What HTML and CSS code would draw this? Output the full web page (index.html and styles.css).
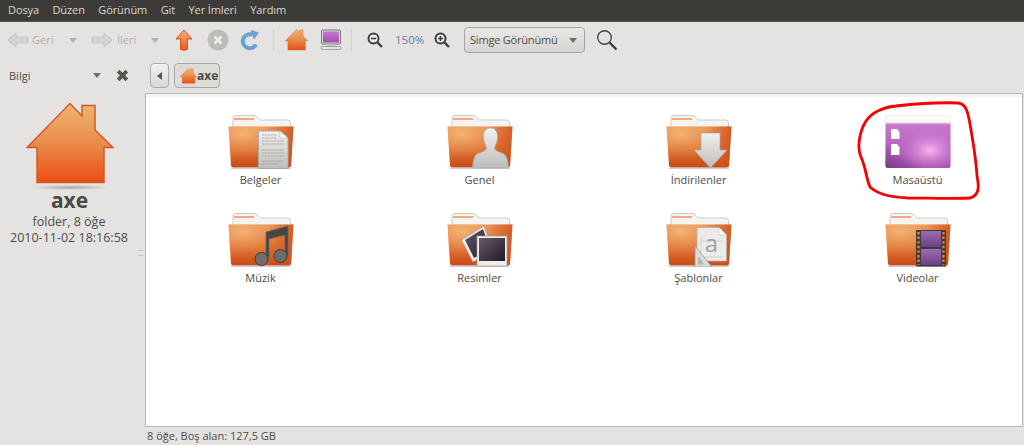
FILE: index.html
```html
<!DOCTYPE html>
<html lang="tr">
<head>
<meta charset="utf-8">
<title>axe - Dosya Yöneticisi</title>
<link rel="stylesheet" href="styles.css">
</head>
<body>
<svg class="defs" width="0" height="0" aria-hidden="true">
  <defs>
    <linearGradient id="fb" x1="0" y1="0" x2="0" y2="1"><stop offset="0" stop-color="#e9975a"/><stop offset=".55" stop-color="#de7434"/><stop offset="1" stop-color="#c94a16"/></linearGradient>
    <radialGradient id="fh" cx=".22" cy=".18" r=".6"><stop offset="0" stop-color="#f6c080" stop-opacity=".75"/><stop offset="1" stop-color="#f0a060" stop-opacity="0"/></radialGradient>
    <linearGradient id="fr" x1="0" y1="0" x2="1" y2="0"><stop offset=".6" stop-color="#d2521c" stop-opacity="0"/><stop offset="1" stop-color="#cf4f18" stop-opacity=".8"/></linearGradient>
    <linearGradient id="hg" x1="0" y1="0" x2="0" y2="1"><stop offset="0" stop-color="#efb574"/><stop offset=".5" stop-color="#e98c4a"/><stop offset="1" stop-color="#e94e13"/></linearGradient>
    <linearGradient id="gg" x1="0" y1="0" x2="0" y2="1"><stop offset="0" stop-color="#f1f1ef"/><stop offset="1" stop-color="#bdbcb9"/></linearGradient>
    <linearGradient id="ph" x1="0" y1="0" x2="1" y2="1"><stop offset="0" stop-color="#6a5a72"/><stop offset="1" stop-color="#1e1a20"/></linearGradient>
    <linearGradient id="ua" x1="0" y1="0" x2="0" y2="1"><stop offset="0" stop-color="#f5b070"/><stop offset="1" stop-color="#e8591c"/></linearGradient>
    <linearGradient id="pg" x1="0" y1="0" x2="0" y2="1"><stop offset="0" stop-color="#c979d0"/><stop offset="1" stop-color="#a04fae"/></linearGradient>
    <radialGradient id="pr" cx=".68" cy=".6" r=".5"><stop offset="0" stop-color="#f6b6ea"/><stop offset="1" stop-color="#d078d8" stop-opacity="0"/></radialGradient>
    <linearGradient id="pd" x1="1" y1="0" x2="0" y2="1"><stop offset=".7" stop-color="#7a3f88" stop-opacity="0"/><stop offset="1" stop-color="#70367e" stop-opacity=".85"/></linearGradient>
    <linearGradient id="fm" x1="0" y1="0" x2="0" y2="1"><stop offset="0" stop-color="#9c6cb0"/><stop offset="1" stop-color="#6d3f88"/></linearGradient>
    <symbol id="folder" viewBox="0 0 66 54">
      <path d="M5 13V3.500Q5 .5 8 .5H26Q28 .5 30 2.500L32.500 5H60Q62.500 5 62.500 8V13Z" fill="#f6f4f1" stroke="#cfccc6"/>
      <rect x="6" y="3" width="20" height="2" fill="#f6a77c"/>
      <path d="M.5 11.500H65.500L63 50.500Q62.800 52.500 60.500 52.500H5.500Q3.200 52.500 3 50.500Z" fill="url(#fb)"/>
      <path d="M.5 11.500H65.500L63 50.500Q62.800 52.500 60.500 52.500H5.500Q3.200 52.500 3 50.500Z" fill="url(#fh)"/>
      <path d="M.5 11.500H65.500L63 50.500Q62.800 52.500 60.500 52.500H5.500Q3.200 52.500 3 50.500Z" fill="url(#fr)"/>
      <path d="M3 53.200H63" stroke="#b9b6b2" stroke-width="1"/>
    </symbol>
    <symbol id="home" viewBox="0 0 88 84">
      <path d="M1 45.500L44 1.500L56 14V3.500H69V28L87 45.500H78V80.500H11V45.500Z" fill="url(#hg)" stroke="#d4592a" stroke-width="1.500" stroke-linejoin="miter"/>
    </symbol>
  </defs>
</svg>

<nav class="menubar">
  <span>Dosya</span><span>Düzen</span><span>Görünüm</span><span>Git</span><span>Yer İmleri</span><span>Yardım</span>
</nav>

<header class="toolbar">
  <svg class="tb-arrow" viewBox="0 0 22 16"><path d="M1 8L9 1V5H21V11H9V15Z" fill="#d6d5d2" stroke="#c6c5c2"/></svg>
  <span class="tb-label tb-geri">Geri</span>
  <i class="caret caret-dim tb-c1"></i>
  <svg class="tb-arrow tb-fwd" viewBox="0 0 22 16"><path d="M21 8L13 1V5H1V11H13V15Z" fill="#d6d5d2" stroke="#c6c5c2"/></svg>
  <span class="tb-label tb-ileri">İleri</span>
  <i class="caret caret-dim tb-c2"></i>
  <svg class="tb-up" viewBox="0 0 18 22"><path d="M9 1L17 10H12.500V20.500Q9 22 5.500 20.500V10H1Z" fill="url(#ua)" stroke="#d9571f"/></svg>
  <svg class="tb-stop" viewBox="0 0 22 22"><circle cx="11" cy="11" r="10.500" fill="#bdbcb9"/><path d="M7.500 7.500L14.500 14.500M14.500 7.500L7.500 14.500" stroke="#eeedeb" stroke-width="2.600"/></svg>
  <svg class="tb-reload" viewBox="0 0 20 22"><path d="M16 15.500A7 7 0 1 1 12.500 5.800" fill="none" stroke="#6a9fd8" stroke-width="4"/><path d="M10.500 1L19 3.500L14 10.500Z" fill="#6a9fd8"/></svg>
  <i class="tb-sep tb-s1"></i>
  <svg class="tb-home" viewBox="0 0 88 84"><use href="#home"/></svg>
  <svg class="tb-pc" viewBox="0 0 22 22">
    <rect x="1.500" y="1" width="19" height="14" rx="1" fill="#d8d7d4" stroke="#77767a"/>
    <rect x="3" y="2.500" width="16" height="11" fill="url(#pg)"/>
    <path d="M7 15H15L16 17.500H6Z" fill="#c4c3c0"/>
    <rect x="1" y="17.500" width="20" height="3" rx="1" fill="#e4e3e0" stroke="#8a8985" stroke-width=".7"/>
  </svg>
  <i class="tb-sep tb-s2"></i>
  <svg class="tb-zoom tb-zout" viewBox="0 0 16 16"><circle cx="6.500" cy="6.500" r="5" fill="#f0efed" stroke="#3f3e3b" stroke-width="2"/><path d="M4 6.500H9" stroke="#3f3e3b" stroke-width="1.600"/><path d="M10.500 10.500L15 15" stroke="#3f3e3b" stroke-width="2.400"/></svg>
  <span class="tb-pct">150%</span>
  <svg class="tb-zoom tb-zin" viewBox="0 0 16 16"><circle cx="6.500" cy="6.500" r="5" fill="#f0efed" stroke="#3f3e3b" stroke-width="2"/><path d="M4 6.500H9M6.500 4V9" stroke="#3f3e3b" stroke-width="1.600"/><path d="M10.500 10.500L15 15" stroke="#3f3e3b" stroke-width="2.400"/></svg>
  <div class="combo"><span class="combo-text">Simge Görünümü</span><i class="caret caret-dark"></i></div>
  <svg class="tb-search" viewBox="0 0 22 22"><circle cx="8.500" cy="8.500" r="6.800" fill="none" stroke="#4a4945" stroke-width="1.400"/><path d="M13.500 13.500L20.500 20.500" stroke="#3f3e3b" stroke-width="2.400"/></svg>
</header>

<div class="workspace">
  <aside class="sidebar">
    <div class="side-head">
      <span class="side-title">Bilgi</span>
      <i class="caret caret-dark side-caret"></i>
      <svg class="side-close" viewBox="0 0 12 12"><path d="M2 2L10 10M10 2L2 10" stroke="#56554f" stroke-width="3.400"/></svg>
    </div>
    <div class="side-icon">
      <svg class="side-home" viewBox="0 0 88 84"><use href="#home"/></svg>
      <i class="side-shadow"></i>
    </div>
    <div class="side-name">axe</div>
    <div class="side-meta">folder, 8 öğe</div>
    <div class="side-meta">2010-11-02 18:16:58</div>
    <i class="grip"></i>
  </aside>

  <main class="main">
    <div class="pathbar">
      <button class="path-back"><i class="tri-left"></i></button>
      <button class="path-crumb"><svg class="crumb-home" viewBox="0 0 88 84"><use href="#home"/></svg><b>axe</b></button>
    </div>
    <section class="iconview">
      <figure class="item">
        <svg class="ficon" viewBox="0 0 66 54"><use href="#folder" width="66" height="54"/>
          <path d="M30.500 16H52L60 23V53.500H30.500Z" fill="url(#gg)" stroke="#a9a8a4"/><path d="M52 16V23H60Z" fill="#fff" stroke="#b5b4b0" stroke-width=".6"/>
          <path d="M34 20H49M34 23H49M34 26H56M34 29H56M34 35H56M34 38H56M34 41H56M34 46H56M34 49H50" stroke="#a3a29f" stroke-width=".8" stroke-dasharray="2.500 .5"/>
        </svg>
        <figcaption>Belgeler</figcaption>
      </figure>
      <figure class="item">
        <svg class="ficon" viewBox="0 0 66 54"><use href="#folder" width="66" height="54"/>
          <path d="M43.500 13C38 13 36 18 36.500 23C37 28 39 31 39.500 33C39 36 34 37 30 39C27 41 26 47 25.500 53H61.500C61 47 60 41 57 39C53 37 48 36 47.500 33C48 31 50 28 50.500 23C51 18 49 13 43.500 13Z" fill="url(#gg)" stroke="#a9a8a4" stroke-width=".6"/>
        </svg>
        <figcaption>Genel</figcaption>
      </figure>
      <figure class="item">
        <svg class="ficon" viewBox="0 0 66 54"><use href="#folder" width="66" height="54"/>
          <path d="M35 18H54V35H61L44.500 53L28 35H35Z" fill="url(#gg)" stroke="#a9a8a4" stroke-width=".7"/>
        </svg>
        <figcaption>İndirilenler</figcaption>
      </figure>
      <figure class="item">
        <svg class="ficon" viewBox="0 0 66 54">
          <path d="M.5 2.500Q.5 .5 2.500 .5H63.500Q65.500 .5 65.500 2.500V7.500H.5Z" fill="#fbfaf8" stroke="#e8e6e2" stroke-width=".6"/>
          <rect x=".5" y="7" width="65" height="1.600" fill="#efe9cf"/>
          <path d="M.5 8.500H65.500V50.500Q65.500 53 63 53H3Q.5 53 .5 50.500Z" fill="url(#pg)"/>
          <path d="M.5 8.500H65.500V50.500Q65.500 53 63 53H3Q.5 53 .5 50.500Z" fill="url(#pr)"/>
          <path d="M.5 8.500H65.500V50.500Q65.500 53 63 53H3Q.5 53 .5 50.500Z" fill="url(#pd)"/>
          <path d="M6 14H12L14.500 17V24H6ZM6 29H12L14.500 32V40H6Z" fill="#fff"/>
        </svg>
        <figcaption>Masaüstü</figcaption>
      </figure>
      <figure class="item">
        <svg class="ficon" viewBox="0 0 66 54"><use href="#folder" width="66" height="54"/>
          <path d="M38 38V19L60 13V43H57V22L41 26V44H38Z" fill="#46453f" stroke="#6b6a66" stroke-width=".8"/>
          <circle cx="33.500" cy="46" r="6.500" fill="#6e6d69" stroke="#3f3e3b"/><circle cx="52.500" cy="43" r="6.500" fill="#6e6d69" stroke="#3f3e3b"/>
        </svg>
        <figcaption>Müzik</figcaption>
      </figure>
      <figure class="item">
        <svg class="ficon" viewBox="0 0 66 54"><use href="#folder" width="66" height="54"/>
          <path d="M14.500 27L37 13L46 38L26 49Z" fill="#eeeeec" stroke="#9c9b97" stroke-width=".7"/>
          <path d="M18 27L36 16L43 36L27 45Z" fill="url(#ph)"/>
          <rect x="30" y="23" width="30" height="30" fill="#eeeeec" stroke="#9c9b97" stroke-width=".7"/>
          <rect x="32" y="25" width="26" height="23" fill="url(#ph)"/>
        </svg>
        <figcaption>Resimler</figcaption>
      </figure>
      <figure class="item">
        <svg class="ficon" viewBox="0 0 66 54"><use href="#folder" width="66" height="54"/>
          <path d="M31 14.500H53L60.500 22V48H31Z" fill="#ecebe9" stroke="#b3b2ae" stroke-width=".8"/>
          <path d="M53 14.500V22H60.500Z" fill="#fff" stroke="#bbb" stroke-width=".5"/>
          <path d="M35 24V44H57M35 28H57" fill="none" stroke="#c6c5c3" stroke-width=".7"/>
          <text class="tpl-a" x="45.500" y="39">a</text>
          <path d="M29 33L46 54H29Z" fill="#dcdbd8" stroke="#9c9b97" stroke-width=".8"/>
          <path d="M32 43L38.500 51.500H32Z" fill="#b4b3b0"/>
        </svg>
        <figcaption>Şablonlar</figcaption>
      </figure>
      <figure class="item">
        <svg class="ficon" viewBox="0 0 66 54"><use href="#folder" width="66" height="54"/>
          <rect x="31" y="17" width="30" height="36.500" rx="1" fill="#3f3a36"/>
          <rect x="36" y="18" width="20" height="16" fill="url(#fm)"/>
          <rect x="36" y="36" width="20" height="16" fill="url(#fm)"/>
          <path d="M33.500 19V52M58.500 19V52" stroke="#d9873e" stroke-width="2.400" stroke-dasharray="2.400 2.200"/>
        </svg>
        <figcaption>Videolar</figcaption>
      </figure>
    </section>
    <footer class="statusbar">8 öğe, Boş alan: 127,5 GB</footer>
  </main>
</div>

<svg class="annotation" viewBox="0 0 122 97" fill="none">
  <path d="M8 19C14 10 26 5 38 4C56 2 80 0 100 1C109 2 110 12 112 22C115 40 118 56 119 74C121 84 122 93 112 96C92 97 70 96 50 96C36 95 22 94 12 85C8 76 8 66 3 55C-1 46 1 30 8 19Z" stroke="#f40000" stroke-width="2.800" stroke-linejoin="round"/>
</svg>
</body>
</html>
```
FILE: styles.css
```css
* { box-sizing: border-box; }
html, body { margin: 0; height: 100%; }
body {
  position: relative;
  width: 1024px;
  height: 445px;
  overflow: hidden;
  background: #e5e3e1;
  color: #4c4b47;
  font: 11px/14px "Open Sans", "Noto Sans", sans-serif;
  display: flex;
  flex-direction: column;
}
.defs { position: absolute; }
i { display: block; font-style: normal; }
svg { display: block; flex: none; }

.menubar {
  height: 22px;
  flex: none;
  background: #3c3b37;
  color: #dcd8cf;
  display: flex;
  align-items: center;
  gap: 13.500px;
  letter-spacing: -0.1px;
  padding: 0 0 1px 8px;
  border-bottom: 1px solid #55534e;
}

.toolbar {
  height: 36px;
  flex: none;
  display: flex;
  align-items: center;
  padding-left: 7px;
}
.tb-arrow { width: 22px; height: 16px; }
.tb-label { color: #b0afab; }
.tb-geri { margin-left: 3px; width: 22px; }
.tb-ileri { margin-left: 4px; width: 20px; }
.caret { width: 0; height: 0; border-left: 4px solid transparent; border-right: 4px solid transparent; border-top: 5px solid; }
.caret-dim { color: #b3b2ae; }
.caret-dark { color: #6f6e6a; }
.tb-c1 { margin-left: 15px; }
.tb-fwd { margin-left: 14px; }
.tb-c2 { margin-left: 14px; }
.tb-up { width: 18px; height: 22px; margin-left: 16px; }
.tb-stop { width: 22px; height: 22px; margin-left: 14px; }
.tb-reload { width: 20px; height: 22px; margin-left: 11px; }
.tb-sep { width: 1px; height: 22px; background: #d3d1ce; }
.tb-s1 { margin-left: 13px; }
.tb-home { width: 23px; height: 22px; margin-left: 11px; }
.tb-pc { width: 22px; height: 22px; margin-left: 12px; }
.tb-s2 { margin-left: 9px; }
.tb-zoom { width: 16px; height: 16px; }
.tb-zout { margin-left: 15px; }
.tb-pct { margin-left: 12px; width: 30px; color: #5b7fa8; font-size: 11.500px; }
.tb-zin { margin-left: 9px; }
.combo {
  width: 121px;
  height: 26px;
  margin-left: 14px;
  padding: 0 7px 0 5px;
  display: flex;
  align-items: center;
  justify-content: space-between;
  border: 1px solid #a8a6a2;
  border-radius: 4px;
  background: linear-gradient(#ebe9e7, #d6d4d1);
}
.combo-text { letter-spacing: -0.2px; }
.tb-search { width: 22px; height: 22px; margin-left: 11px; }

.workspace { flex: 1; display: flex; min-height: 0; }

.sidebar { position: relative; width: 145px; flex: none; text-align: center; }
.side-head { height: 35px; display: flex; align-items: center; padding-left: 9px; text-align: left; }
.side-title { width: 84px; }
.side-close { width: 13px; height: 13px; margin-left: 15px; }
.side-icon { height: 100px; padding: 9px 0 0 26px; }
.side-home { width: 88px; height: 84px; }
.side-shadow { width: 78px; height: 5px; margin: -1px 0 0 5px; background: radial-gradient(closest-side, #a9a7a4, #e5e3e1); }
.side-name { font-size: 21px; line-height: 22px; font-weight: 700; color: #4a4a48; margin-top: -4px; padding-right: 6px; }
.side-meta { font-size: 12.500px; line-height: 16px; padding-right: 7px; }
.side-name + .side-meta { margin-top: 3px; }
.grip { position: absolute; right: 2px; top: 192px; width: 5px; height: 6px; border-top: 1px solid #c4c2bf; border-bottom: 1px solid #c4c2bf; }

.main { flex: 1; min-width: 0; display: flex; flex-direction: column; padding-right: 1px; }
.pathbar { height: 35px; flex: none; display: flex; align-items: flex-start; gap: 5px; padding: 5px 0 0 5px; }
.path-back, .path-crumb {
  height: 25px;
  padding: 0;
  border: 1px solid #aeaca8;
  border-radius: 4px;
  background: linear-gradient(#f2f1ef, #d9d7d4);
  display: flex;
  align-items: center;
  font: inherit;
  color: inherit;
}
.path-back { width: 19px; justify-content: center; }
.tri-left { border-top: 4px solid transparent; border-bottom: 4px solid transparent; border-right: 5px solid #55544f; }
.path-crumb { width: 46px; padding-left: 5px; gap: 0; border-color: #a8a6a2; background: #dedcd9; }
.crumb-home { width: 17px; height: 16px; }
.path-crumb b { font-size: 12px; }

.iconview {
  flex: 1;
  min-height: 0;
  background: #fff;
  border: 1px solid #b9b7b3;
  box-shadow: inset 0 3px 0 #f5f4f3;
  padding: 21px 0 0 5px;
  display: grid;
  grid-template-columns: repeat(4, 219px);
  grid-auto-rows: 98px;
  align-content: start;
}
.item { margin: 0; display: flex; flex-direction: column; align-items: center; }
.ficon { width: 66px; height: 54px; }
.item figcaption { margin-top: 4px; line-height: 14px; color: #4c4b47; }
.tpl-a { font: 24px "Open Sans", sans-serif; fill: #a3a2a0; text-anchor: middle; }

.statusbar { height: 18px; flex: none; padding: 2px 0 0 2px; line-height: 14px; }

.annotation { position: absolute; left: 858px; top: 102px; width: 122px; height: 97px; overflow: visible; }
```
